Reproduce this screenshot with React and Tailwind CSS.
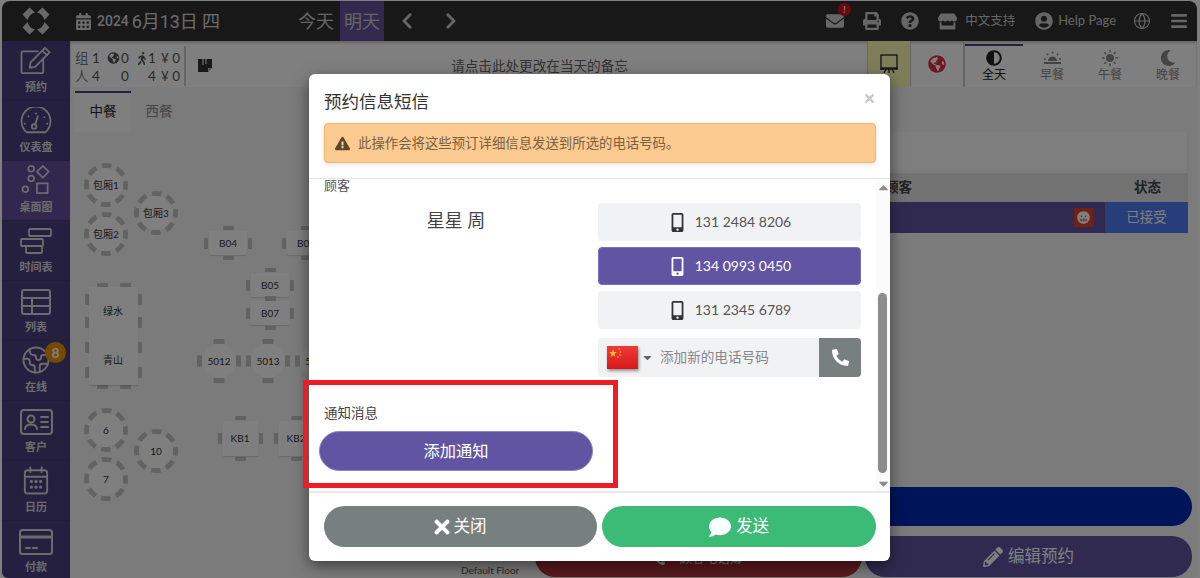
import React from 'react';
import { FaCalendarAlt, FaEnvelope, FaPrint, FaQuestionCircle, FaStore, FaUserCircle, FaBars, FaMobileAlt, FaPhoneAlt, FaTimes, FaComment, FaExclamationTriangle, FaPencilAlt, FaGlobeAmericas, FaAdjust, FaMoon, FaChevronLeft, FaChevronRight, FaWalking, FaGrimace, FaCaretDown, FaCaretUp } from 'react-icons/fa';
import { Globe, Earth } from 'lucide-react';

const S = { fill: 'none', stroke: 'currentColor', strokeWidth: 2, strokeLinecap: 'round', strokeLinejoin: 'round' };
const icons = {
  edit: <svg width="34" height="29" viewBox="0 0 36 32" {...S}><path d="M26 14v14a2 2 0 0 1-2 2H4a2 2 0 0 1-2-2V8a2 2 0 0 1 2-2h16" /><path d="M12 18l-1 6 6-1L33 7l-5-5z" /><path d="M25 5l5 5" /></svg>,
  gauge: <svg width="32" height="28" viewBox="0 0 34 30" {...S}><path d="M7 27a15.500 15.500 0 1 1 20 0z" /><circle cx="15" cy="21" r="2.500" /><path d="M16 19l3-9" /><path d="M5 18h.01M9 10h.01M17 7h.01M26 11h.01M29 18h.01" /></svg>,
  floor: <svg width="30" height="31" viewBox="0 0 30 32" fill="none" stroke="currentColor" strokeWidth="1.800"><circle cx="10" cy="5" r="3" /><circle cx="10" cy="15" r="3" /><circle cx="4" cy="26" r="3" /><path d="M22 2l6 6-6 6-6-6z" /><rect x="16" y="20" width="11" height="10" /></svg>,
  schedule: <svg width="32" height="28" viewBox="0 0 32 28" fill="none" stroke="currentColor" strokeWidth="1.800"><rect x="9" y="2" width="22" height="7" rx="1" /><rect x="1" y="12" width="22" height="7" rx="1" /><rect x="6" y="19" width="16" height="7" rx="1" /></svg>,
  list: <svg width="30" height="26" viewBox="0 0 30 26" {...S}><rect x="1" y="1" width="28" height="24" rx="2" /><path d="M1 9h28M1 17h28M11 9v16" /></svg>,
  client: <svg width="33" height="26" viewBox="0 0 33 26" {...S}><rect x="1" y="1" width="31" height="24" rx="3" /><circle cx="11" cy="10" r="3.500" /><path d="M5 20c0-6 12-6 12 0" /><path d="M21 8h7M21 13h7M21 18h7" /></svg>,
  cal: <svg width="26" height="29" viewBox="0 0 28 30" {...S}><rect x="2" y="4" width="24" height="25" rx="3" /><path d="M2 11h24M8 1v5M20 1v5" /><path d="M9 16h.01M14 16h.01M19 16h.01M9 22h.01M14 22h.01M19 22h.01" strokeWidth="3.500" /></svg>,
  card: <svg width="34" height="26" viewBox="0 0 34 26" {...S}><rect x="1" y="1" width="32" height="24" rx="2.500" /><path d="M1 8h32" strokeWidth="3" /><path d="M7 19h4M14 19h4" /></svg>,
};

const nav = [
  ['预约', 'edit'], ['仪表盘', 'gauge'], ['桌面图', 'floor'], ['时间表', 'schedule'], ['列表', 'list'],
  ['在线', 'earth'], ['客户', 'client'], ['日历', 'cal'], ['付款', 'card'],
];

const CHAIR = '#c4c4c4';

function Round({ x, y, r = 17, label, size = 10, four }) {
  const box = (r + 7) * 2;
  const c = box / 2;
  const R = r + 2.500;
  const step = (2 * Math.PI * R) / 8;
  return (
    <div className="absolute flex items-center justify-center" style={{ left: x - c, top: y - c, width: box, height: box }}>
      <svg className="absolute inset-0" width={box} height={box}>
        {four ? (
          [0, 90, 180, 270].map((a) => (
            <rect key={a} x={c - 5.500} y={c - r - 5} width="11" height="5" rx="1" fill={CHAIR} transform={`rotate(${a} ${c} ${c})`} />
          ))
        ) : (
          <circle cx={c} cy={c} r={R} fill="none" stroke={CHAIR} strokeWidth="5" strokeDasharray={`${step * 0.62} ${step * 0.38}`} strokeDashoffset={step * 0.31} />
        )}
        <circle cx={c} cy={c} r={r} fill="#ffffff" />
      </svg>
      <span className="relative text-[#333]" style={{ fontSize: size }}>{label}</span>
    </div>
  );
}

function Chair({ className }) {
  return <div className={`absolute bg-[#c4c4c4] rounded-[1px] ${className}`} />;
}

function Rect({ x, y, w, h, label, size = 10, double, topRow, bottomRow }) {
  return (
    <div className="absolute" style={{ left: x - w / 2, top: y - h / 2, width: w, height: h }}>
      {double ? (
        <>
          <Chair className="w-[4px] h-[11px] -left-[4px] top-[7px]" />
          <Chair className="w-[4px] h-[11px] -left-[4px] bottom-[7px]" />
          <Chair className="w-[4px] h-[11px] -right-[4px] top-[7px]" />
          <Chair className="w-[4px] h-[11px] -right-[4px] bottom-[7px]" />
          {topRow && <Chair className="w-[11px] h-[4px] -top-[4px] left-[8px]" />}
          {topRow && <Chair className="w-[11px] h-[4px] -top-[4px] right-[7px]" />}
          {bottomRow && <Chair className="w-[11px] h-[4px] -bottom-[4px] left-[8px]" />}
          {bottomRow && <Chair className="w-[11px] h-[4px] -bottom-[4px] right-[7px]" />}
        </>
      ) : (
        <>
          <Chair className="w-[11px] h-[4px] -top-[5px] left-1/2 -ml-[5.500px]" />
          <Chair className="w-[11px] h-[4px] -bottom-[5px] left-1/2 -ml-[5.500px]" />
          <Chair className="w-[4px] h-[11px] -left-[5px] top-1/2 -mt-[5.500px]" />
          <Chair className="w-[4px] h-[11px] -right-[5px] top-1/2 -mt-[5.500px]" />
        </>
      )}
      <div className="absolute inset-0 bg-white rounded-[1px] shadow-[0_1px_1px_rgba(0,0,0,0.15)] flex items-center justify-center text-[#333]" style={{ fontSize: size }}>{label}</div>
    </div>
  );
}

function Period({ icon, label, active }) {
  return (
    <div className={`w-[58px] h-[41px] flex flex-col items-center justify-start pt-[3px] ${active ? 'border-t-2 border-[#4a4080] text-[#222]' : 'border-t-2 border-transparent text-[#888]'}`}>
      <div className="h-[18px] flex items-center text-[16px]">{icon}</div>
      <span className="text-[12px] leading-[15px]">{label}</span>
    </div>
  );
}

function Phone({ num, active }) {
  return (
    <div className={`h-[38px] rounded-[4px] flex items-center justify-center gap-[8px] text-[14px] ${active ? 'bg-[#6155a3] text-white border border-[#7a6fc0]' : 'bg-[#f1f2f4] text-[#555]'}`}>
      <FaMobileAlt className={`text-[19px] ${active ? 'text-white' : 'text-[#333]'}`} />
      <span className="-mt-[2px]">{num}</span>
    </div>
  );
}

const rays = [0, 45, 90, 135, 180, 225, 270, 315];

export default function App() {
  return (
    <div className="w-[1200px] h-[578px] bg-white overflow-hidden relative font-['Lato','Noto_Sans_CJK_SC',sans-serif]">
      <div className="ml-[2px] mr-[3px] mt-[1px] h-[577px] rounded-t-[8px] rounded-b-[6px] overflow-hidden bg-white flex flex-col">
        {/* Header */}
        <header className="h-[40px] bg-[#303030] flex items-center text-[#ccc] shrink-0">
          <div className="w-[68px] flex justify-center">
            <svg width="28" height="28" viewBox="0 0 28 28" fill="#d0d0d0">
              {[0, 90, 180, 270].map((a) => (
                <path key={a} d="M7.500 0.500 L13 5.500 Q7 7 5.500 13 L0.500 7.500 Z" transform={`rotate(${a} 14 14)`} />
              ))}
            </svg>
          </div>
          <div className="flex items-center w-[226px] pl-[5px] text-[#d8d8d8] font-['Roboto','Noto_Sans_CJK_SC',sans-serif]">
            <FaCalendarAlt className="text-[17px] mr-[5px]" />
            <span className="text-[14px] font-medium mr-[3px]">2024</span>
            <span className="text-[18px] tracking-[-0.1px]">6月13日 四</span>
          </div>
          <span className="text-[18px] w-[36px] text-center ml-[2px]">今天</span>
          <span className="text-[18px] w-[44px] h-full ml-[6px] flex items-center justify-center bg-[#64549c]">明天</span>
          <FaChevronLeft className="ml-[14px] text-[18px]" />
          <FaChevronRight className="ml-[26px] text-[18px]" />
          <div className="flex-1" />
          <div className="relative mr-[19px]">
            <FaEnvelope className="text-[18px]" />
            <span className="absolute -top-[9px] -right-[7px] w-[13px] h-[13px] rounded-full bg-[#d9121f] text-white text-[9px] leading-[13px] text-center font-bold">!</span>
          </div>
          <FaPrint className="text-[18px] mr-[20px]" />
          <FaQuestionCircle className="text-[18px] mr-[19px]" />
          <FaStore className="text-[19px] mr-[8px]" />
          <span className="text-[12.500px] mr-[20px]">中文支持</span>
          <FaUserCircle className="text-[18px] mr-[5px]" />
          <span className="text-[13px] mr-[17px]">Help Page</span>
          <Globe size={18} strokeWidth={1.500} className="mr-[19px]" />
          <FaBars className="text-[18px] mr-[9px]" />
        </header>

        <div className="flex flex-1 min-h-0">
          {/* Sidebar */}
          <aside className="w-[68px] bg-[#4a4080] text-[#d8d8d8] flex flex-col shrink-0">
            {nav.map(([label, key]) => (
              <div key={label} className={`h-[60px] shrink-0 flex flex-col items-center justify-end pb-[7px] gap-[5px] border-b border-[#443a76] relative ${key === 'floor' ? 'bg-[#64509f]' : ''}`}>
                {key === 'earth' ? <Earth size={30} strokeWidth={1.500} /> : icons[key]}
                <span className="text-[11px] font-bold leading-[13px]">{label}</span>
                {key === 'earth' && <span className="absolute top-[1px] right-[4px] w-[21px] h-[21px] rounded-full bg-[#f09400] text-white text-[14px] font-bold leading-[21px] text-center">8</span>}
              </div>
            ))}
          </aside>

          {/* Main */}
          <main className="flex-1 min-w-0 bg-[#f6f6f6] flex flex-col">
            <div className="h-[46px] bg-white flex items-center shrink-0 shadow-[inset_0_2px_3px_rgba(0,0,0,0.2)]">
              <div className="w-[114px] h-full pl-[5px] pt-[8px] text-[13.500px] leading-[18px] text-[#555]">
                <div className="flex items-center h-[18px]">
                  <span className="w-[17px] text-[#777]">组</span><span className="w-[14px]">1</span>
                  <FaGlobeAmericas className="text-[12px] w-[15px]" /><span className="w-[15px]">0</span>
                  <FaWalking className="text-[13px] w-[12px]" /><span className="w-[13px]">1</span><span>¥ 0</span>
                </div>
                <div className="flex items-center h-[18px]">
                  <span className="w-[17px] text-[#777]">人</span><span className="w-[29px]">4</span>
                  <span className="w-[27px]">0</span>
                  <span className="w-[13px]">4</span><span>¥ 0</span>
                </div>
              </div>
              <div className="w-[2px] h-[40px] mt-[4px] bg-[#ccc]" />
              <svg className="ml-[12px] text-[#333]" width="14" height="18" viewBox="0 0 14 18">
                <path d="M0 4h14v9l-4 4H0z" fill="currentColor" />
                <path d="M10 13h4l-4 4z" fill="#bbb" />
                <path d="M5 10V2.500a1.500 1.500 0 0 1 3 0V9" fill="none" stroke="#fff" strokeWidth="1" />
              </svg>
              <div className="flex-1 text-center text-[13.600px] text-[#666] pt-[4px]">请点击此处更改在当天的备忘</div>
              <div className="w-[44px] h-full bg-[#fdfdb5] flex items-center justify-center text-[#222] border-r border-[#ccc] border-l">
                <svg width="18" height="20" viewBox="0 0 18 20" fill="none" stroke="currentColor" strokeWidth="1.300"><rect x="1" y="1" width="16" height="13" /><path d="M0 15h18M6 15l-2 4M9 15v4M12 15l2 4" /></svg>
              </div>
              <div className="w-[54px] h-full flex items-center justify-center border-r-2 border-[#ccc]"><FaGlobeAmericas className="text-[18px] text-[#e0303f]" /></div>
              <Period active icon={<FaAdjust />} label="全天" />
              <Period label="早餐" icon={
                <svg width="17" height="14" viewBox="0 0 17 14" fill="currentColor"><path d="M4 10a4.500 4.500 0 0 1 9 0z" /><rect y="11" width="17" height="2" /><circle cx="8.500" cy="1.500" r="1" /><circle cx="3.500" cy="3.500" r="1" /><circle cx="13.500" cy="3.500" r="1" /><circle cx="1" cy="8" r="1" /><circle cx="16" cy="8" r="1" /></svg>
              } />
              <Period label="午餐" icon={
                <svg width="16" height="16" viewBox="0 0 16 16" fill="currentColor"><circle cx="8" cy="8" r="4" />{rays.map((a) => <rect key={a} x="7.300" y="0" width="1.400" height="2.500" transform={`rotate(${a} 8 8)`} />)}</svg>
              } />
              <Period icon={<FaMoon />} label="晚餐" />
            </div>

            <div className="flex-1 relative min-h-0">
              <div className="flex pl-[5px] text-[13.500px] h-[41px] pt-[4px]">
                <div className="w-[56px] h-[41px] bg-white border-t-2 border-[#4a4080] flex items-start pt-[8px] justify-center text-[#222]">中餐</div>
                <div className="w-[56px] flex items-start pt-[10px] justify-center text-[#888]">西餐</div>
              </div>

              {/* Floor canvas: coordinates relative to this panel (x-70, y-87) */}
              <Round x={36} y={98} label="包厢1" />
              <Round x={36} y={147} label="包厢2" />
              <Round x={86} y={126} label="包厢3" />
              <Rect x={158} y={156} w={38} h={24} label="B04" />
              <Rect x={236} y={156} w={38} h={24} label="B06" />
              <Rect x={200} y={198} w={38} h={24} label="B05" />
              <Rect x={200} y={226} w={38} h={24} label="B07" />
              <Rect x={43} y={224} w={49} h={48} label="绿水" double topRow />
              <Rect x={43} y={273} w={49} h={50} label="青山" double bottomRow />
              <Round x={149} y={274} four label="5012" />
              <Round x={198} y={274} four label="5013" />
              <Round x={247} y={274} four label="5014" />
              <Round x={36} y={343} label="6" />
              <Round x={86} y={364} label="10" />
              <Round x={36} y={392} label="7" />
              <Rect x={170} y={351} w={35} h={35} label="KB1" />
              <Rect x={226} y={351} w={35} h={35} label="KB2" />

              <div className="absolute left-[391px] top-[476px] text-[10px] text-[#555]">Default Floor</div>

              {/* Right list panel */}
              <div className="absolute left-[730px] right-[9px] top-[45px] h-[38px] bg-[#fcfcfc] border-r border-[#eee]" />
              <div className="absolute left-[730px] right-[9px] top-[86px] h-[29px] bg-[#e4e4e4] flex items-center text-[13.500px] font-bold text-[#444]">
                <span className="ml-[85px]">顾客</span>
                <span className="ml-auto mr-[27px]">状态</span>
              </div>
              <div className="absolute left-[730px] right-[9px] top-[115px] h-[31px] bg-[#6155a3] flex items-center justify-end">
                <div className="w-[19px] h-[19px] bg-[#e0432e] flex items-center justify-center mr-[12px]"><FaGrimace className="text-[13px] text-white" /></div>
                <div className="w-[83px] h-full bg-[#4f7cf5] flex items-center justify-center text-white text-[13.500px]">已接受</div>
              </div>

              <div className="absolute left-[795px] w-[327px] top-[400px] h-[39px] rounded-[20px] bg-[#0028b4]" />
              <div className="absolute left-[795px] w-[327px] top-[449px] h-[41px] rounded-[20px] bg-[#6155a3] flex items-center justify-center gap-[5px] text-white text-[16.500px]"><FaPencilAlt className="text-[20px]" />编辑预约</div>
              <div className="absolute left-[465px] w-[327px] top-[449px] h-[41px] rounded-[20px] bg-[#b43438] flex items-center justify-center pt-[6px] gap-[15px] text-white text-[12.500px]"><FaPhoneAlt className="text-[10px]" />顾客电话簿</div>
            </div>
          </main>
        </div>
      </div>

      {/* Backdrop */}
      <div className="absolute inset-0 bg-black/50" />

      {/* Modal */}
      <div className="absolute left-[309px] top-[74px] w-[581px] h-[487px] bg-white rounded-[6px] shadow-[0_5px_15px_rgba(0,0,0,0.5)] flex flex-col text-[#333]">
        <div className="h-[105px] shrink-0 border-b border-[#e5e5e5] pl-[15px] pr-[14px] relative">
          <div className="text-[17.500px] leading-[26px] pt-[15px] h-[49px]">预约信息短信</div>
          <FaTimes className="absolute right-[14px] top-[18px] text-[13px] text-[#c8c8c8]" />
          <div className="h-[40px] rounded-[4px] bg-[#fbca91] border border-[#f5b66b] shadow-[0_2px_5px_rgba(0,0,0,0.1)] flex items-center pl-[10px] text-[13.400px] text-[#7a6040] gap-[8px]">
            <FaExclamationTriangle className="text-[15px] text-[#5c4628]" />
            此操作会将这些预订详细信息发送到所选的电话号码。
          </div>
        </div>

        <div className="h-[312px] shrink-0 flex min-h-0">
          <div className="flex-1 min-w-0 overflow-hidden pl-[15px] pr-[15px]">
            <div className="text-[13px] leading-[16px] text-[#555] -mt-[2px] h-[26px]">顾客</div>
            <div className="flex">
              <div className="w-[264px] text-center text-[18px] leading-[34px] text-[#444]">星星 周</div>
              <div className="ml-[10px] w-[263px] flex flex-col gap-[6px]">
                <Phone num="131 2484 8206" />
                <Phone num="134 0993 0450" active />
                <Phone num="131 2345 6789" />
                <div className="h-[39px] mt-[3px] rounded-[4px] bg-[#f1f2f4] flex items-center overflow-hidden">
                  <svg className="ml-[9px] shadow-[1px_2px_3px_rgba(0,0,0,0.4)]" width="31" height="23" viewBox="0 0 31 23">
                    <defs><linearGradient id="flag" x1="0" y1="0" x2="0" y2="1"><stop offset="0" stopColor="#ee3a3a" /><stop offset="1" stopColor="#d81818" /></linearGradient></defs>
                    <rect width="31" height="23" fill="url(#flag)" />
                    <path d="M6 3l1 3h3l-2.500 2 1 3L6 9.200 3.500 11l1-3L2 6h3z" fill="#f0c030" />
                    <circle cx="12" cy="3" r="0.800" fill="#f0c030" /><circle cx="13.500" cy="6" r="0.800" fill="#f0c030" /><circle cx="13" cy="9" r="0.800" fill="#f0c030" /><circle cx="11" cy="11" r="0.800" fill="#f0c030" />
                  </svg>
                  <FaCaretDown className="ml-[3px] text-[13px] text-[#666]" />
                  <span className="ml-[6px] text-[13.600px] text-[#888] flex-1">添加新的电话号码</span>
                  <div className="w-[42px] h-full bg-[#777f7f] flex items-center justify-center text-white"><FaPhoneAlt className="text-[17px]" /></div>
                </div>
              </div>
            </div>
            <div className="mt-[28px] text-[13.500px] leading-[16px] text-[#444]">通知消息</div>
            <div className="mt-[10px] -ml-[5px] w-[274px] h-[40px] rounded-[20px] bg-[#6155a3] border border-[#8d83c6] text-white text-[16.300px] flex items-center justify-center">添加通知</div>
          </div>
          <div className="w-[14px] shrink-0 bg-[#fbfbfb] flex flex-col items-center text-[#8c8c8c] relative">
            <FaCaretUp className="text-[15px] mt-[1px]" />
            <div className="absolute top-[114px] left-[2px] w-[9px] h-[180px] rounded-[5px] bg-[#8c8c8c]" />
            <FaCaretDown className="text-[15px] mt-auto" />
          </div>
        </div>

        <div className="flex-1 border-t-2 border-[#e9e9e9] pl-[15px] pr-[14px] flex items-start gap-[5px] pt-[13px] text-white text-[16.500px]">
          <div className="w-[273px] shrink-0 h-[41px] pr-[4px] rounded-[21px] bg-[#777f7f] flex items-center justify-center gap-[1px]"><FaTimes className="text-[22px]" />关闭</div>
          <div className="flex-1 h-[41px] rounded-[21px] bg-[#3cbb76] flex items-center justify-center gap-[5px]"><FaComment className="text-[22px]" />发送</div>
        </div>
      </div>

      {/* Annotation */}
      <div className="absolute left-[303px] top-[380px] w-[315px] h-[108px] border-[5px] border-[#ee1c25]" />
    </div>
  );
}
